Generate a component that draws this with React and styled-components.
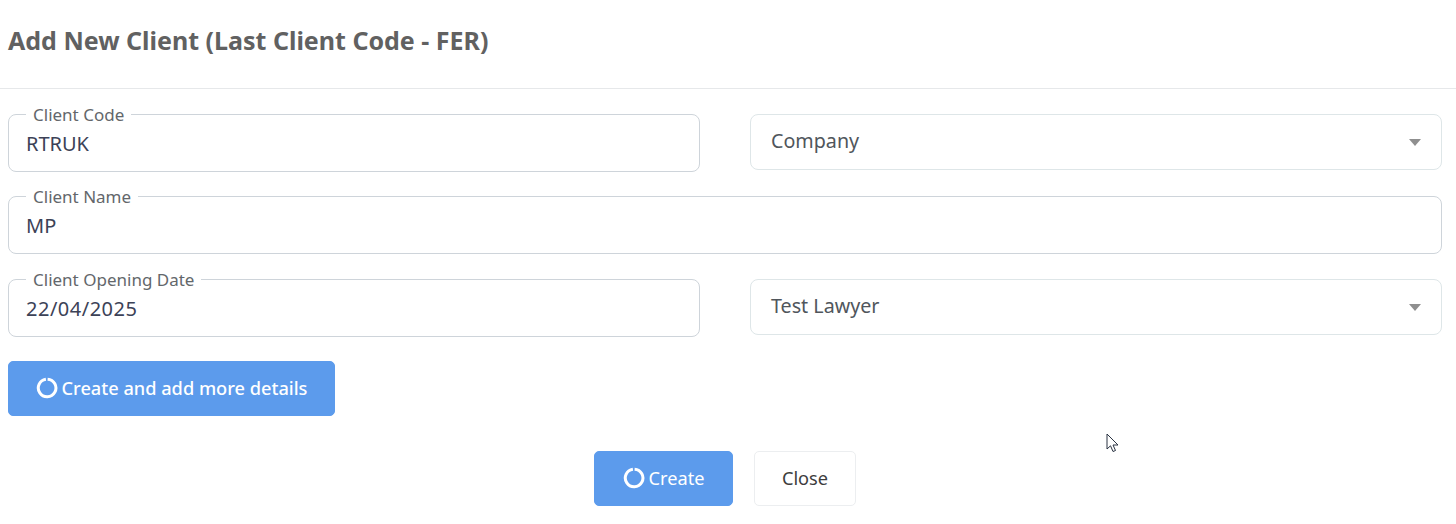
import React from 'react';
import styled, { createGlobalStyle } from 'styled-components';

const GlobalStyle = createGlobalStyle`
  html, body {
    margin: 0;
    padding: 0;
    background: #fff;
    font-family: "Noto Sans", "Open Sans", sans-serif;
  }
`;

const Page = styled.div`
  position: relative;
  width: 1456px;
  height: 524px;
  overflow: hidden;
  background: #fff;
`;

const Header = styled.div`
  height: 89px;
  box-sizing: border-box;
  padding: 24px 8px 0;
  border-bottom: 1px solid #e6e8ea;
`;

const Title = styled.h1`
  margin: 0;
  font-size: 25px;
  line-height: 33px;
  font-weight: 700;
  color: #616161;
`;

const Form = styled.div`
  display: flex;
  flex-direction: column;
  padding: 14px 14px 0 8px;
`;

const Row = styled.div`
  display: grid;
  grid-template-columns: ${(p) => (p.$full ? '1fr' : '692px 692px')};
  column-gap: 50px;
  margin-bottom: ${(p) => p.$gap}px;
`;

const Field = styled.fieldset`
  margin: 0;
  padding: 0 17px;
  height: 69px;
  box-sizing: border-box;
  border: 1px solid #ced4da;
  border-radius: 8px;
  min-width: 0;
`;

const Legend = styled.legend`
  padding: 2px 7px 0;
  font-size: 17px;
  line-height: 20px;
  color: #63676b;
`;

const Value = styled.div`
  font-size: 20px;
  line-height: 26px;
  margin-top: 6px;
  letter-spacing: ${(p) => p.$spacing || 0}px;
  color: #3c4257;
`;

const Select = styled.div`
  display: flex;
  align-items: center;
  justify-content: space-between;
  align-self: end;
  height: 56px;
  margin-bottom: 2px;
  box-sizing: border-box;
  padding: 0 20px 3px;
  border: 1px solid #dee6e8;
  border-radius: 8px;
  font-size: 19.7px;
  color: #50565c;
`;

const Caret = styled.span`
  width: 0;
  height: 0;
  margin-top: 3px;
  border-left: 6.5px solid transparent;
  border-right: 6.5px solid transparent;
  border-top: 7px solid #8f8f8f;
`;

const Button = styled.button`
  display: inline-flex;
  align-items: center;
  justify-content: center;
  gap: 4px;
  box-sizing: border-box;
  height: ${(p) => p.$height}px;
  width: ${(p) => p.$width}px;
  padding: 0 0 2px;
  border: 1px solid ${(p) => (p.$primary ? '#5c9bec' : '#eceef0')};
  border-radius: 5px;
  background: ${(p) => (p.$primary ? '#5c9bec' : '#fff')};
  color: ${(p) => (p.$primary ? '#fff' : '#3d3d3d')};
  font-family: inherit;
  font-size: 18.2px;
  font-weight: ${(p) => p.$weight || 400};
`;

const Footer = styled.div`
  display: flex;
  justify-content: center;
  gap: 21px;
  margin: 35px 0 0 0;
`;

const Cursor = styled.svg`
  position: absolute;
  left: 1106px;
  top: 433px;
`;

const Spinner = () => (
  <svg width="22" height="22" viewBox="0 0 22 22" fill="none">
    <path
      d="M11.6 2.2A8.8 8.8 0 1 1 9.9 2.27"
      stroke="#fff"
      strokeWidth="3"
    />
  </svg>
);

export default function App() {
  return (
    <Page>
      <GlobalStyle />
      <Header>
        <Title>Add New Client (Last Client Code - FER)</Title>
      </Header>
      <Form>
        <Row $gap={13}>
          <Field>
            <Legend>Client Code</Legend>
            <Value>RTRUK</Value>
          </Field>
          <Select>
            Company
            <Caret />
          </Select>
        </Row>
        <Row $full $gap={14}>
          <Field>
            <Legend>Client Name</Legend>
            <Value>MP</Value>
          </Field>
        </Row>
        <Row $gap={24}>
          <Field>
            <Legend>Client Opening Date</Legend>
            <Value $spacing={0.5}>22/04/2025</Value>
          </Field>
          <Select>
            Test Lawyer
            <Caret />
          </Select>
        </Row>
        <div>
          <Button $primary $width={327} $height={55} $weight={500}>
            <Spinner />
            Create and add more details
          </Button>
        </div>
        <Footer>
          <Button $primary $width={139} $height={55}>
            <Spinner />
            Create
          </Button>
          <Button $width={102} $height={55}>Close</Button>
        </Footer>
      </Form>
      <Cursor width="14" height="21" viewBox="0 0 14 21">
        <path
          d="M1 1V16L4.5 12.8L7 18.5L9.5 17.5L7 12H12Z"
          fill="#fff"
          stroke="#2a3342"
          strokeWidth="1"
        />
      </Cursor>
    </Page>
  );
}
